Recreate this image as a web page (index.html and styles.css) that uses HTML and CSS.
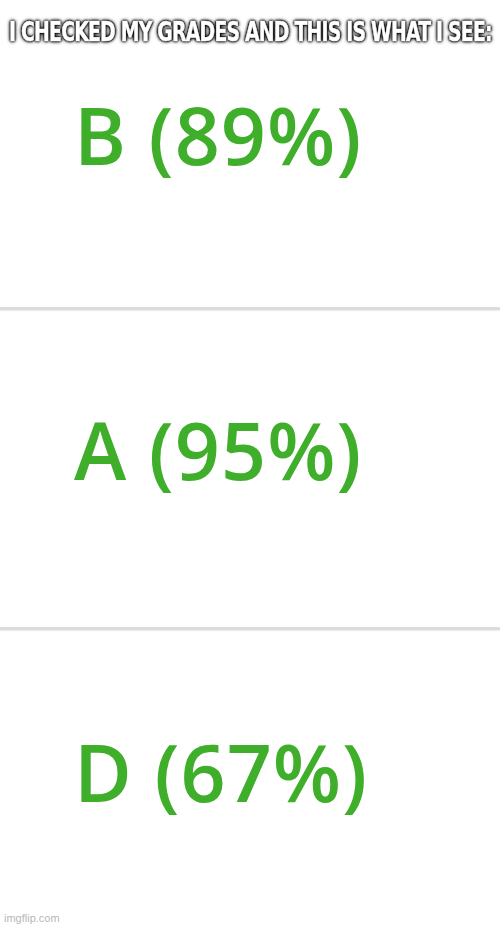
FILE: index.html
```html
<!DOCTYPE html>
<html lang="en">
<head>
    <meta charset="UTF-8">
    <meta name="viewport" content="width=device-width, initial-scale=1.0">
    <title>Grades</title>
    <link rel="stylesheet" href="styles.css">
</head>
<body>
    <div class="meme">
        <div class="caption">
            <span class="caption-text">I CHECKED MY GRADES AND THIS IS WHAT I SEE:</span>
        </div>

        <div class="row row-first">
            <div class="grade">B (89%)</div>
        </div>
        <div class="row row-mid">
            <div class="grade">A (95%)</div>
        </div>
        <div class="row row-last">
            <div class="grade">D (67%)</div>
        </div>

        <div class="watermark">imgflip.com</div>
    </div>
</body>
</html>
```

FILE: styles.css
```css
body {
    margin: 0;
    background: #fff;
}
.meme {
    position: relative;
    width: 500px;
    height: 928px;
    overflow: hidden;
    background: #fff;
    display: flex;
    flex-direction: column;
}
.caption {
    height: 60px;
    display: flex;
    justify-content: center;
    padding-top: 18px;
    box-sizing: border-box;
}
.caption-text {
    display: inline-block;
    font-family: "DejaVu Sans Condensed", "DejaVu Sans", sans-serif;
    font-weight: bold;
    font-size: 27px;
    line-height: 1;
    color: #fff;
    white-space: nowrap;
    letter-spacing: -1px;
    transform: scaleX(0.775);
    -webkit-text-stroke: 0.5px #fff;
    text-shadow: 0 0 2px #000, 0 0 3px #000, 0 0 4px #000, 0 0 5px #000, 0 0 2px #000;
}
.row {
    box-sizing: border-box;
    padding-left: 74px;
    border-bottom: 3px solid #dcdcdc;
    box-shadow: 0 1px 1px #eee;
}
.row-first {
    height: 250px;
    padding-top: 35px;
}
.row-mid {
    height: 320px;
    padding-top: 100px;
}
.row-last {
    flex: 1;
    padding-top: 102px;
    border-bottom: none;
    box-shadow: none;
}
.grade {
    font-family: "Open Sans", sans-serif;
    font-weight: 600;
    font-size: 79px;
    line-height: 1;
    letter-spacing: 1px;
    color: #3fae2a;
    filter: blur(0.6px);
}
.watermark {
    position: absolute;
    left: 4px;
    bottom: 4px;
    font-family: "Liberation Sans", Arial, sans-serif;
    font-size: 11px;
    color: #b8b8b8;
}
```
